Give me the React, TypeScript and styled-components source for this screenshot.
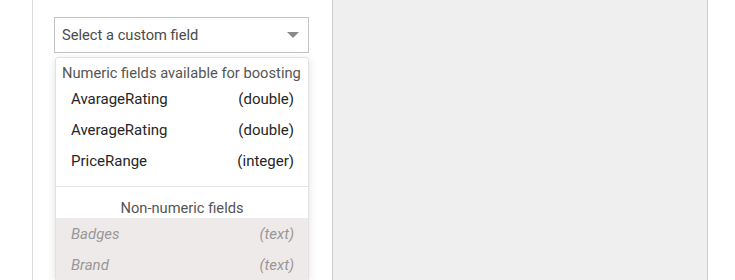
import React from "react";
import styled, { createGlobalStyle } from "styled-components";

const GlobalStyle = createGlobalStyle`
  html, body {
    margin: 0;
    padding: 0;
    background: #ffffff;
    font-family: Roboto, "Liberation Sans", sans-serif;
  }
`;

const Page = styled.div`
  display: flex;
  height: 280px;
  overflow: hidden;
`;

const Gutter = styled.div`
  width: 32px;
  flex-shrink: 0;
`;

const Card = styled.div`
  width: 300px;
  flex-shrink: 0;
  border-left: 1px solid #dcdcdc;
  padding: 17px 0 0 21px;
  box-sizing: border-box;
`;

const Preview = styled.div`
  width: 374px;
  flex-shrink: 0;
  border-left: 1px solid #cfcfcf;
  border-right: 1px solid #cfcfcf;
  background: #efefef;
`;

const SelectWrap = styled.div`
  position: relative;
  width: 255px;
`;

const SelectBox = styled.div`
  height: 36px;
  box-sizing: border-box;
  border: 1px solid #c4c4c4;
  display: flex;
  align-items: center;
  justify-content: space-between;
  padding: 0 8px 0 7px;
  font-size: 14.7px;
  color: #4a4a4a;
`;

const Caret = styled.span`
  width: 0;
  height: 0;
  border-left: 6px solid transparent;
  border-right: 6px solid transparent;
  border-top: 6px solid #8a8a8a;
  margin-right: 1px;
`;

const Menu = styled.div`
  position: absolute;
  top: 40px;
  left: 1px;
  width: 254px;
  box-sizing: border-box;
  background: #ffffff;
  border: 1px solid #e2e2e2;
  border-radius: 3px;
  box-shadow: 0 2px 8px rgba(0, 0, 0, 0.12);
  overflow: hidden;
`;

const GroupTitle = styled.div<{ $center?: boolean }>`
  font-size: 14.7px;
  color: #555555;
  line-height: ${({ $center }) => ($center ? "20px" : "19px")};
  padding: ${({ $center }) => ($center ? "11px 7px 0" : "6px 6px 0")};
  text-align: ${({ $center }) => ($center ? "center" : "left")};
`;

const Option = styled.div<{ $disabled?: boolean }>`
  display: flex;
  justify-content: space-between;
  height: 31px;
  align-items: center;
  padding: 0 14px 0 15px;
  font-size: 15px;
  color: ${({ $disabled }) => ($disabled ? "#9a9696" : "#262626")};
  font-style: ${({ $disabled }) => ($disabled ? "italic" : "normal")};
  background: ${({ $disabled }) => ($disabled ? "#efeaea" : "transparent")};
`;

const Divider = styled.div`
  height: 1px;
  background: #e4e4e4;
  margin-top: 10px;
`;

const DisabledGroup = styled.div`
  background: #efeaea;
`;

const numeric = [
  { name: "AvarageRating", type: "double" },
  { name: "AverageRating", type: "double" },
  { name: "PriceRange", type: "integer" },
];

const other = [
  { name: "Badges", type: "text" },
  { name: "Brand", type: "text" },
];

export default function App() {
  return (
    <>
      <GlobalStyle />
      <Page>
        <Gutter />
        <Card>
          <SelectWrap>
            <SelectBox>
              <span>Select a custom field</span>
              <Caret />
            </SelectBox>
            <Menu>
              <GroupTitle>Numeric fields available for boosting</GroupTitle>
              {numeric.map((f) => (
                <Option key={f.name}>
                  <span>{f.name}</span>
                  <span>({f.type})</span>
                </Option>
              ))}
              <Divider />
              <GroupTitle $center>Non-numeric fields</GroupTitle>
              <DisabledGroup>
                {other.map((f) => (
                  <Option key={f.name} $disabled>
                    <span>{f.name}</span>
                    <span>({f.type})</span>
                  </Option>
                ))}
              </DisabledGroup>
            </Menu>
          </SelectWrap>
        </Card>
        <Preview />
      </Page>
    </>
  );
}
